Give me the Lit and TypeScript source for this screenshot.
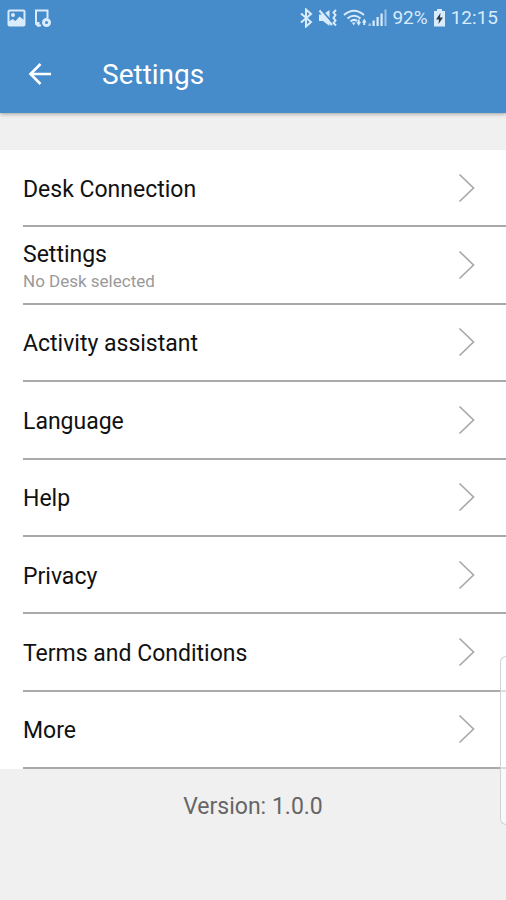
import { LitElement, html, css, nothing } from "lit";
import { customElement, property } from "lit/decorators.js";

@customElement("status-bar")
class StatusBar extends LitElement {
  static styles = css`
    :host {
      display: flex;
      align-items: center;
      justify-content: space-between;
      height: 36px;
      padding: 0 8px 0 7px;
      color: #d8ecfd;
      font-size: 19px;
      line-height: 36px;
    }
    .group {
      display: flex;
      align-items: center;
      gap: 5px;
    }
    .left {
      gap: 8px;
    }
    svg {
      display: block;
      fill: none;
      stroke: currentColor;
      stroke-width: 2;
    }
    .solid {
      fill: currentColor;
      stroke: none;
    }
    .bolt {
      fill: #2d3a48;
      stroke: none;
    }
    .gap {
      stroke: #468bca;
    }
    .faint {
      fill: currentColor;
      stroke: none;
      opacity: 0.6;
    }
  `;

  render() {
    return html`
      <div class="group left">
        <svg width="19" height="18" viewBox="0 0 19 18" aria-hidden="true">
          <rect x="1.5" y="1.5" width="16" height="15" rx="1" />
          <circle class="solid" cx="6" cy="6" r="2" />
          <path class="solid" d="M2 12.500l3.500-2.500 3 2 4-4.500L17 11v6H2z" />
        </svg>
        <svg width="18" height="19" viewBox="0 0 18 19" aria-hidden="true">
          <path d="M7 16.500H4L2 14.500V1.500H13.500V9" />
          <path class="solid" d="M1 13h4.500v4.500H3.500L1 15z" />
          <circle cx="12.500" cy="13.500" r="3" stroke-width="3" />
        </svg>
      </div>
      <div class="group">
        <svg width="14" height="20" viewBox="0 0 14 20" aria-hidden="true">
          <path d="M2 5.500l10 8.500-5 4.500V1.500l5 4.500-10 8.500" />
        </svg>
        <svg width="20" height="18" viewBox="0 0 20 18" aria-hidden="true">
          <path class="solid" d="M1 5.500h4l6.500-4.500v16l-6.500-5H1z" />
          <path class="gap" d="M3 0.500l12 14" />
          <path d="M1.500 1.500l12.500 14.500" />
          <path d="M18 1l-2.500 2.500 2 2.500-2 3 2 2.500-2 2.500 2.500 2.500" />
        </svg>
        <svg width="44" height="20" viewBox="2 0 44 20" aria-hidden="true">
          <path d="M3 7Q13-1.500 23 7M6.500 10.500Q13 5 19.500 10.500M9.500 13.500Q13 10.500 16 13" />
          <path class="solid" d="M11 14.500h3.500l-1.800 3z" />
          <path class="solid" d="M15.500 14h1.200v-2.500h2V14H20l-2.300 4zM25.500 14.500h-1.300V17h-2v-2.500H21l2.300-4z" />
          <path class="faint" d="M27.500 15.500h2.500v2.500h-2.500z" />
          <path class="solid" d="M31.500 12.500h2.200V18h-2.200zM35.500 9h2.200v9h-2.200zM39.500 5.500h2.200V18h-2.200z" />
          <path class="faint" d="M43.500 1.500h2V18h-2z" />
        </svg>
        <span>92%</span>
        <svg width="13" height="18" viewBox="0 0 13 18" aria-hidden="true">
          <path class="solid" d="M4 0h5v2h3v15.500H1V2h3z" />
          <path class="bolt" d="M7.500 4L3 10.500h3L5.500 15 10 8.500H7z" />
        </svg>
        <time>12:15</time>
      </div>
    `;
  }
}

@customElement("settings-row")
class SettingsRow extends LitElement {
  @property() label = "";
  @property() detail = "";

  static styles = css`
    :host {
      display: grid;
      padding-left: 23px;
      background: #fff;
    }
    button {
      display: flex;
      align-items: center;
      justify-content: space-between;
      width: 100%;
      margin: 0;
      padding: 0 30px 0 0;
      border: 0;
      border-bottom: 2px solid #a9a9a9;
      background: none;
      color: #111;
      font: inherit;
      text-align: left;
      cursor: pointer;
    }
    .text {
      display: flex;
      flex-direction: column;
      padding-top: 4px;
    }
    .label {
      font-size: 23px;
      line-height: 28px;
    }
    .detail {
      color: #999;
      font-size: 17px;
      line-height: 24px;
    }
    svg {
      fill: none;
      stroke: #a6a6a6;
      stroke-width: 1.6;
    }
  `;

  render() {
    return html`
      <button type="button">
        <span class="text">
          <span class="label">${this.label}</span>
          ${this.detail ? html`<span class="detail">${this.detail}</span>` : nothing}
        </span>
        <svg width="18" height="30" viewBox="0 0 18 30" aria-hidden="true">
          <path d="M1.500 1.500L15.500 15L1.500 28.500" />
        </svg>
      </button>
    `;
  }
}

@customElement("app-root")
class AppRoot extends LitElement {
  private rows = [
    { label: "Desk Connection", detail: "" },
    { label: "Settings", detail: "No Desk selected" },
    { label: "Activity assistant", detail: "" },
    { label: "Language", detail: "" },
    { label: "Help", detail: "" },
    { label: "Privacy", detail: "" },
    { label: "Terms and Conditions", detail: "" },
    { label: "More", detail: "" },
  ];

  static styles = css`
    :host {
      display: flex;
      flex-direction: column;
      min-height: 100vh;
      background: #f0f0f0;
      font-family: Roboto, sans-serif;
    }
    header {
      background: #468bca;
      box-shadow: 0 1px 4px rgba(0, 0, 0, 0.35);
    }
    .toolbar {
      display: flex;
      align-items: center;
      gap: 48px;
      height: 77px;
      padding-left: 26px;
      color: #fff;
    }
    .back {
      display: flex;
      padding: 0;
      border: 0;
      background: none;
      color: inherit;
      cursor: pointer;
    }
    .back path {
      fill: none;
      stroke: currentColor;
      stroke-width: 2.6;
    }
    h1 {
      margin: 0;
      font-size: 28px;
      font-weight: 400;
      line-height: 36px;
    }
    .list {
      display: grid;
      grid-auto-rows: 1fr;
      min-height: 619px;
      margin-top: 37px;
    }
    .version {
      margin: 0;
      padding: 24px 0;
      color: #666;
      font-size: 23px;
      line-height: 28px;
      text-align: center;
    }
    .edge-panel {
      position: fixed;
      top: 656px;
      right: 0;
      box-sizing: border-box;
      width: 6px;
      height: 169px;
      border: 1px solid #d2d2d2;
      border-right: 0;
      border-radius: 6px 0 0 6px;
      background: rgba(255, 255, 255, 0.6);
    }
  `;

  render() {
    return html`
      <header>
        <status-bar></status-bar>
        <div class="toolbar">
          <button class="back" type="button" aria-label="Back">
            <svg width="28" height="28" viewBox="0 0 28 28">
              <path d="M25 13H4.500M14.500 3L4.500 13L14.500 23" />
            </svg>
          </button>
          <h1>Settings</h1>
        </div>
      </header>
      <main>
        <nav class="list" aria-label="Settings">
          ${this.rows.map(
            (r) => html`<settings-row .label=${r.label} .detail=${r.detail}></settings-row>`
          )}
        </nav>
        <p class="version">Version: 1.0.0</p>
      </main>
      <div class="edge-panel"></div>
    `;
  }
}
